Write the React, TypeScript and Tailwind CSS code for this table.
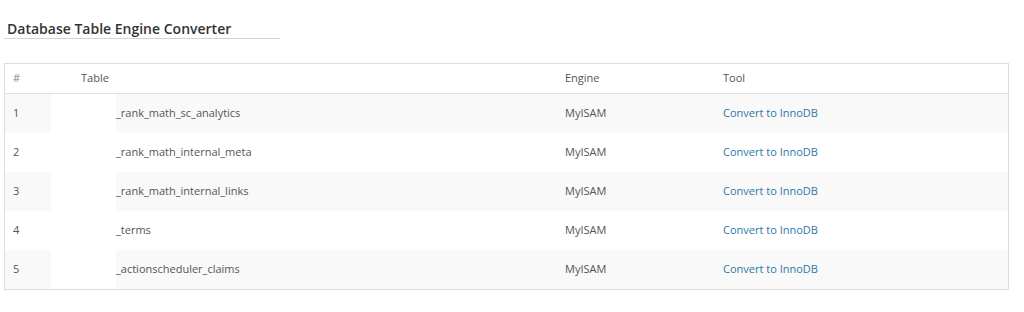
import React from "react";

interface Row {
  id: number;
  table: string;
  engine: string;
}

const rows: Row[] = [
  { id: 1, table: "_rank_math_sc_analytics", engine: "MyISAM" },
  { id: 2, table: "_rank_math_internal_meta", engine: "MyISAM" },
  { id: 3, table: "_rank_math_internal_links", engine: "MyISAM" },
  { id: 4, table: "_terms", engine: "MyISAM" },
  { id: 5, table: "_actionscheduler_claims", engine: "MyISAM" },
];

const App: React.FC = () => {
  return (
    <div className="w-[1024px] h-[312px] bg-white font-['Open_Sans',sans-serif] text-[#555]">
      <div className="pt-[21px] pl-[4px]">
        <h2 className="w-[276px] border-b border-[#d4d4d4] pl-[3px] pb-[1px] text-[14px] leading-[16px] font-semibold text-[#333]">
          Database Table Engine Converter
        </h2>
      </div>

      <div className="mt-[24px] ml-[4px] w-[1005px] border border-[#dcdcdc]">
        <table className="w-full border-collapse text-[11px] table-fixed">
          <colgroup>
            <col className="w-[67px]" />
            <col className="w-[484px]" />
            <col className="w-[158px]" />
            <col />
          </colgroup>
          <thead>
            <tr className="h-[29px] border-b border-[#e1e1e1]">
              <th className="pl-[8px] text-left font-normal text-[#888]">#</th>
              <th className="pl-[9px] text-left font-normal">Table</th>
              <th className="pl-[9px] text-left font-normal">Engine</th>
              <th className="pl-[9px] text-left font-normal">Tool</th>
            </tr>
          </thead>
          <tbody>
            {rows.map((r) => (
              <tr
                key={r.id}
                className={`h-[39px] ${r.id % 2 === 1 ? "bg-[#f9f9f9]" : "bg-white"}`}
              >
                <td className="pl-[8px]">{r.id}</td>
                <td className="p-0 h-[39px]">
                  <div className="flex h-full items-stretch">
                    {/* redacted table prefix */}
                    <span className="w-[65px] -ml-[21px] bg-white h-[39px]" />
                    <span className="flex items-center">{r.table}</span>
                  </div>
                </td>
                <td className="pl-[9px]">{r.engine}</td>
                <td className="pl-[9px]">
                  <a href="#" className="text-[#2e78a8]">
                    Convert to InnoDB
                  </a>
                </td>
              </tr>
            ))}
          </tbody>
        </table>
      </div>
    </div>
  );
};

export default App;
